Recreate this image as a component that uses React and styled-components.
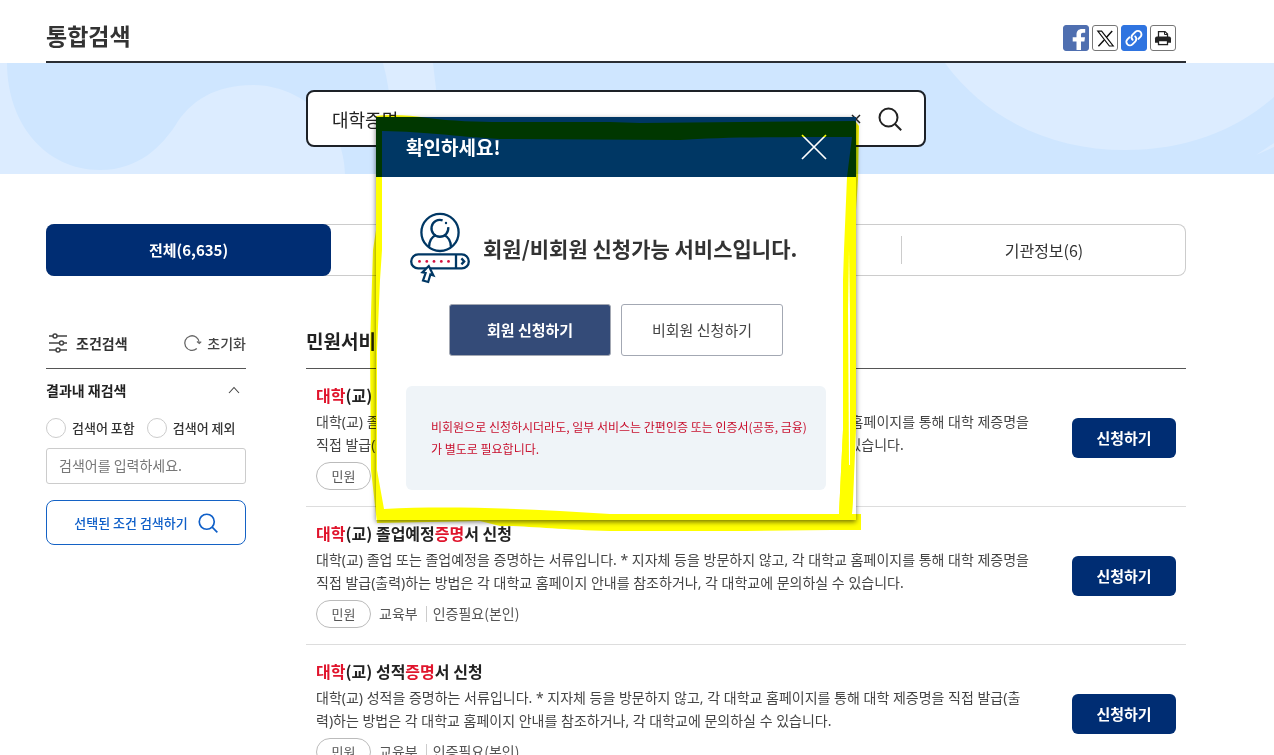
import React, { useState } from 'react'
import styled, { createGlobalStyle, css } from 'styled-components'

const GlobalStyle = createGlobalStyle`
    * {
        box-sizing: border-box;
    }

    body {
        margin: 0;
        background: #fff;
        color: #333;
        font-family: "Noto Sans CJK KR", sans-serif;
        font-size: 14px;
    }

    h1, h2, h3, p, ul {
        margin: 0;
        padding: 0;
    }

    button, input {
        font-family: inherit;
    }

    button {
        padding: 0;
        border: 0;
        background: none;
        color: inherit;
        cursor: pointer;
    }
`

const Page = styled.div`
    position: relative;
    height: 100vh;
    overflow: hidden;
`

const Container = styled.div`
    padding: 0 88px 0 46px;
`

const Header = styled.header`
    display: flex;
    align-items: center;
    justify-content: space-between;
    height: 63px;
    padding: 15px 10px 0 0;
    border-bottom: 2px solid #2b2e34;
`

const PageTitle = styled.h1`
    padding-bottom: 6px;
    font-size: 23px;
    line-height: 32px;
`

const ShareList = styled.div`
    display: flex;
    gap: 3px;
`

const ShareButton = styled.button`
    display: flex;
    width: 26px;
    height: 26px;
    overflow: hidden;
    border: 1px solid ${props => props.$line || props.$bg};
    border-radius: 3px;
    background: ${props => props.$bg};
`

const Banner = styled.section`
    position: relative;
    height: 111px;
    padding-top: 27px;
    background: #cfe6ff;
`

const Waves = styled.svg`
    position: absolute;
    top: 0;
    left: 0;
    width: 100%;
    height: 100%;
`

const SearchForm = styled.form`
    position: relative;
    display: flex;
    align-items: center;
    max-width: 620px;
    height: 57px;
    margin: 0 auto;
    padding: 0 22px 0 24px;
    border: 2px solid #1d2127;
    border-radius: 8px;
    background: #fff;
    color: #222;
`

const SearchInput = styled.input`
    flex: 1;
    min-width: 0;
    padding: 0;
    border: 0;
    outline: 0;
    background: none;
    color: #222;
    font-size: 18px;
`

const IconButton = styled.button`
    display: flex;
    margin-left: ${props => props.$gap || 0}px;
`

const Tabs = styled.nav`
    display: grid;
    grid-template-columns: repeat(4, 1fr);
    height: 52px;
    margin-top: 50px;
    border-radius: 8px;
    box-shadow: inset 0 0 0 1px #ccc;
`

const Tab = styled.button`
    display: flex;
    align-items: center;
    justify-content: center;
    color: #333;
    font-size: 16px;

    span {
        flex: 1;
        line-height: 28px;
    }

    & + & span {
        border-left: 1px solid #ccc;
    }

    ${props => props.$active && css`
        border-radius: 8px;
        background: #002d73;
        color: #fff;
        font-size: 15px;
        font-weight: 700;
    `}
`

const Columns = styled.div`
    display: grid;
    grid-template-columns: 200px 1fr;
    gap: 60px;
    margin-top: 40px;
`

const PanelHead = styled.div`
    display: flex;
    align-items: center;
    height: 53px;
    padding-top: 2px;
    border-bottom: 1px solid #555;
`

const FilterTitle = styled.h2`
    flex: 1;
    margin-left: 8px;
    color: #333;
    font-size: 14px;
`

const ResetButton = styled.button`
    display: flex;
    align-items: center;
    gap: 4px;
    color: #444;
    font-size: 14px;
    font-weight: 500;
`

const FoldButton = styled.button`
    display: flex;
    align-items: center;
    justify-content: space-between;
    width: 100%;
    height: 44px;
    padding: 0 6px 2px 0;
    color: #222;
    font-size: 14px;
    font-weight: 700;
`

const Radios = styled.div`
    display: flex;
    gap: 12px;
    height: 30px;
    align-items: center;
`

const RadioLabel = styled.label`
    display: flex;
    align-items: center;
    gap: 6px;
    color: #333;
    font-size: 13px;
    font-weight: 500;
    line-height: 20px;
`

const Radio = styled.input`
    appearance: none;
    width: 20px;
    height: 20px;
    margin: 0;
    border: 1px solid #ccc;
    border-radius: 50%;
    background: #fff;

    &:checked {
        border: 6px solid #0b5bc4;
    }
`

const WordInput = styled.input`
    display: block;
    width: 100%;
    height: 36px;
    margin-top: 5px;
    padding: 0 12px 2px;
    border: 1px solid #ccc;
    border-radius: 3px;
    font-size: 14px;

    &::placeholder {
        color: #777;
    }
`

const FilterButton = styled.button`
    display: flex;
    align-items: center;
    justify-content: center;
    gap: 10px;
    width: 100%;
    height: 45px;
    margin-top: 16px;
    border: 1px solid #1462c5;
    border-radius: 8px;
    color: #0f5fc8;
    font-size: 13px;
    font-weight: 500;
`

const ResultTitle = styled.h2`
    padding-bottom: 6px;
    color: #222;
    font-size: 19px;
`

const ResultItem = styled.li`
    display: flex;
    align-items: flex-start;
    gap: 20px;
    padding: 14px 10px 16px;
    border-bottom: 1px solid #ddd;
    list-style: none;
`

const ResultBody = styled.div`
    flex: 1;
    min-width: 0;
`

const ResultName = styled.h3`
    color: #222;
    font-size: 16px;
    line-height: 24px;

    em {
        color: #e0142c;
        font-style: normal;
    }
`

const Description = styled.p`
    margin-top: 3px;
    color: #444;
    font-family: "Noto Sans", "Noto Sans CJK KR", sans-serif;
    font-size: 14px;
    line-height: 23px;
    white-space: pre-line;
`

const Meta = styled.div`
    display: flex;
    align-items: center;
    height: 28px;
    margin-top: 6px;
    color: #555;
    font-size: 14px;
    line-height: 14px;

    span {
        padding-bottom: 2px;
    }

    span + span {
        margin-left: 8px;
        padding-left: 6px;
        border-left: 1px solid #ccc;
    }
`

const Badge = styled.strong`
    width: 55px;
    height: 28px;
    margin-right: 8px;
    border: 1px solid #bbb;
    border-radius: 14px;
    font-size: 13px;
    font-weight: 400;
    line-height: 25px;
    text-align: center;
`

const ApplyButton = styled.button`
    width: 104px;
    height: 40px;
    margin-top: 35px;
    padding-bottom: 2px;
    border-radius: 6px;
    background: #002d73;
    color: #fff;
    font-size: 15px;
    font-weight: 700;
`

const ModalLayer = styled.div`
    position: absolute;
    top: 117px;
    right: 88px;
    left: 46px;
    display: flex;
    justify-content: center;
`

const Modal = styled.div`
    width: 480px;
    background: #fff;
    box-shadow: 0 2px 5px rgba(0, 0, 0, 0.55);
`

const ModalHead = styled.div`
    display: flex;
    align-items: center;
    justify-content: space-between;
    height: 60px;
    padding: 0 29px 0 30px;
    background: #003764;
    color: #fff;

    h2 {
        padding-bottom: 2px;
        font-size: 19px;
    }
`

const ModalBody = styled.div`
    padding: 34px 30px 30px;
`

const Notice = styled.div`
    display: flex;
    align-items: center;
    gap: 12px;
    height: 76px;
    padding-left: 3px;

    p {
        padding-bottom: 2px;
        color: #333;
        font-size: 21px;
        font-weight: 700;
    }
`

const ModalButtons = styled.div`
    display: flex;
    justify-content: center;
    gap: 10px;
    margin-top: 17px;
`

const ModalButton = styled.button`
    width: 162px;
    height: 52px;
    padding-bottom: 2px;
    border: 1px solid #a3a8b3;
    border-radius: 3px;
    background: ${props => (props.$primary ? '#344b78' : '#fff')};
    color: ${props => (props.$primary ? '#fff' : '#444')};
    font-size: 15px;
    font-weight: ${props => (props.$primary ? 700 : 400)};
`

const Guide = styled.p`
    padding: 30px 10px 30px 25px;
    margin-top: 30px;
    border-radius: 6px;
    background: #eff4f8;
    color: #c8102e;
    font-size: 12px;
    line-height: 22px;
`

// sits beside the dialog, not in it, so that the ink also tints the page behind
const MarkerLayer = styled(ModalLayer)`
    top: 100px;
    mix-blend-mode: multiply;
    pointer-events: none;
`

const MagnifierIcon = ({ size, width }) => (
    <svg width={size} height={size} viewBox="0 0 24 24" fill="none" stroke="currentColor" strokeWidth={width}>
        <circle cx="10.5" cy="10.5" r="9" />
        <path d="M17 17L23.2 23.2" />
    </svg>
)

const FacebookIcon = () => (
    <svg width="24" height="24" viewBox="0 0 24 24" fill="#fff">
        <path d="M12.5 25V15.5H8.7V11.2H12.5V8.6C12.5 5 14.5 2.9 18 2.9H21.2V6.8H19C17.5 6.8 17 7.5 17 8.8V11.2H21L20.4 15.5H17V25Z" />
    </svg>
)

const XIcon = () => (
    <svg width="24" height="24" viewBox="0 0 24 24" fill="none" stroke="#111">
        <path d="M4.8 5.2H8.6L20.2 20H16.4Z" strokeWidth="1.2" />
        <path d="M19.2 5L13.3 11.6M11.2 13.9L5.4 20.3" strokeWidth="1.5" />
    </svg>
)

const LinkIcon = () => (
    <svg width="24" height="24" viewBox="0 0 24 24" fill="none" stroke="#fff" strokeWidth="1.9" strokeLinecap="round">
        <path d="M10.6 13.8A3.5 3.5 0 0 1 10.4 8.9L13.4 5.9A3.5 3.5 0 0 1 18.4 10.9L16.4 12.9" />
        <path d="M13.2 10.4A3.5 3.5 0 0 1 13.4 15.3L10.4 18.3A3.5 3.5 0 0 1 5.4 13.3L7.4 11.3" />
    </svg>
)

const PrintIcon = () => (
    <svg width="24" height="24" viewBox="0 0 24 24">
        <path d="M7.5 11V5.6H14L16.5 8V11" fill="#fff" stroke="#222" strokeWidth="1.3" />
        <path d="M13.5 5.5V8.5H16.5" fill="none" stroke="#222" />
        <path d="M6 10.6H18Q20 10.6 20 12.5V16.8H4V12.5Q4 10.6 6 10.6Z" fill="#222" />
        <rect x="7.5" y="14.6" width="9" height="4" fill="#fff" stroke="#222" strokeWidth="1.3" />
    </svg>
)

const CrossIcon = ({ size, width }) => (
    <svg width={size} height={size} viewBox={`0 0 ${size} ${size}`} stroke="currentColor" strokeWidth={width}>
        <path d={`M1 1L${size - 1} ${size - 1}M${size - 1} 1L1 ${size - 1}`} />
    </svg>
)

const SlidersIcon = () => (
    <svg width="22" height="22" viewBox="0 0 22 22" fill="#fff" stroke="#444" strokeWidth="1.5">
        <path d="M3 4H21M3 11H21M3 18H21" />
        <circle cx="9" cy="4" r="2" />
        <circle cx="15.5" cy="11" r="2" />
        <circle cx="12" cy="18" r="2" />
    </svg>
)

const ResetIcon = () => (
    <svg width="20" height="18" viewBox="0 0 20 18" fill="none" stroke="#666" strokeWidth="1.3">
        <path d="M13.8 14.6A7.3 7.3 0 1 1 16.3 8.8" />
        <path d="M14 7.6L16.3 9.4L18.2 7.6" />
    </svg>
)

const ChevronIcon = () => (
    <svg width="12" height="8" viewBox="0 0 12 8" fill="none" stroke="#444" strokeWidth="1.1">
        <path d="M1 7L6 1.5L11 7" />
    </svg>
)

const MemberIcon = () => (
    <svg width="62" height="74" viewBox="0 0 62 74" fill="none" stroke="#003764" strokeWidth="2.3">
        <circle cx="31" cy="20.4" r="18.6" />
        <path d="M33.6 8.4A8.4 8.4 0 1 0 39.2 15.2" />
        <path d="M20 35.4C20 28 23.5 24.6 27 23M42 35.4C42 28 38.5 24.6 35 23" />
        <circle cx="37" cy="11" r="1.2" fill="#003764" stroke="none" />
        <rect x="2.2" y="42.4" width="57.6" height="14" rx="7" />
        <path d="M47 42.6V56.6M52.4 46.4L55.2 49.4L52.4 52.4" />
        <g fill="#d5113f" stroke="none">
            <circle cx="10.5" cy="49.4" r="1.4" />
            <circle cx="17.8" cy="49.4" r="1.4" />
            <circle cx="25" cy="49.4" r="1.4" />
            <circle cx="32.3" cy="49.4" r="1.4" />
            <circle cx="39.5" cy="49.4" r="1.4" />
        </g>
        <path d="M19.8 54L13.4 60.4L16.6 61L14 68.6L19.2 70L21.4 62.4L24.4 63.4Z" fill="#fff" strokeWidth="2.2" />
    </svg>
)

const HighlighterMark = () => (
    <MarkerLayer>
        <svg width="510" height="440" viewBox="361 100 510 440" fill="#ff0" aria-hidden="true">
            <path
                fillRule="evenodd"
                d="M376 116C390 114 410 115 428 118C450 121 480 122 500 122L610 122L640 123L855 121L859 126L858 180L856 210V430L853 500L852 514H861V530H832L745 531H610C560 530 530 526 500 526L480 521L377 523L371 470L370 345L373 250L376 230ZM382 131C430 132 450 136 500 139L680 140C720 137 790 137 852 137L847 177L844 250L843 280V430L839 514H610L560 511C500 508 440 506 384 509L377 470L377 350L380 280L382 250Z"
            />
            <path d="M839 514L843 430H855L852 514Z" />
            <path d="M849 250L850 310V465H849L848 310Z" fill="#fff" />
        </svg>
    </MarkerLayer>
)

const results = [
    {
        name: ' 졸업',
        description: '대학(교) 졸업 또는 졸업예정을 증명하는 서류입니다. * 지자체 등을 방문하지 않고, 각 대학교 홈페이지를 통해 대학 제증명을\n직접 발급(출력)하는 방법은 각 대학교 홈페이지 안내를 참조하거나, 각 대학교에 문의하실 수 있습니다.',
    },
    {
        name: ' 졸업예정',
        description: '대학(교) 졸업 또는 졸업예정을 증명하는 서류입니다. * 지자체 등을 방문하지 않고, 각 대학교 홈페이지를 통해 대학 제증명을\n직접 발급(출력)하는 방법은 각 대학교 홈페이지 안내를 참조하거나, 각 대학교에 문의하실 수 있습니다.',
    },
    {
        name: ' 성적',
        description: '대학(교) 성적을 증명하는 서류입니다. * 지자체 등을 방문하지 않고, 각 대학교 홈페이지를 통해 대학 제증명을 직접 발급(출\n력)하는 방법은 각 대학교 홈페이지 안내를 참조하거나, 각 대학교에 문의하실 수 있습니다.',
    },
]

const tabs = ['전체(6,635)', '', '', '기관정보(6)']

const Filter = () => (
    <aside>
        <PanelHead>
            <SlidersIcon />
            <FilterTitle>조건검색</FilterTitle>
            <ResetButton type="button">
                <ResetIcon />
                초기화
            </ResetButton>
        </PanelHead>
        <FoldButton type="button">
            결과내 재검색
            <ChevronIcon />
        </FoldButton>
        <Radios>
            <RadioLabel>
                <Radio type="radio" name="range" />
                검색어 포함
            </RadioLabel>
            <RadioLabel>
                <Radio type="radio" name="range" />
                검색어 제외
            </RadioLabel>
        </Radios>
        <WordInput type="text" aria-label="검색어" placeholder="검색어를 입력하세요." />
        <FilterButton type="button">
            선택된 조건 검색하기
            <MagnifierIcon size={20} width={2} />
        </FilterButton>
    </aside>
)

const Results = () => (
    <main>
        <PanelHead>
            <ResultTitle>민원서비스</ResultTitle>
        </PanelHead>
        <ul>
            {results.map(item => (
                <ResultItem key={item.name}>
                    <ResultBody>
                        <ResultName>
                            <em>대학</em>(교){item.name}<em>증명</em>서 신청
                        </ResultName>
                        <Description>{item.description}</Description>
                        <Meta>
                            <Badge>민원</Badge>
                            <span>교육부</span>
                            <span>인증필요(본인)</span>
                        </Meta>
                    </ResultBody>
                    <ApplyButton type="button">신청하기</ApplyButton>
                </ResultItem>
            ))}
        </ul>
    </main>
)

const MemberModal = ({ onClose }) => (
    <ModalLayer>
        <Modal role="dialog" aria-labelledby="modal-title">
            <ModalHead>
                <h2 id="modal-title">확인하세요!</h2>
                <IconButton type="button" aria-label="닫기" onClick={onClose}>
                    <CrossIcon size={26} width={1.7} />
                </IconButton>
            </ModalHead>
            <ModalBody>
                <Notice>
                    <MemberIcon />
                    <p>회원/비회원 신청가능 서비스입니다.</p>
                </Notice>
                <ModalButtons>
                    <ModalButton type="button" $primary>회원 신청하기</ModalButton>
                    <ModalButton type="button">비회원 신청하기</ModalButton>
                </ModalButtons>
                <Guide>
                    비회원으로 신청하시더라도, 일부 서비스는 간편인증 또는 인증서(공동, 금융)
                    <br />
                    가 별도로 필요합니다.
                </Guide>
            </ModalBody>
        </Modal>
    </ModalLayer>
)

const App = () => {
    const [keyword, setKeyword] = useState('대학증명')
    const [open, setOpen] = useState(true)

    return (
        <Page>
            <GlobalStyle />
            <Container>
                <Header>
                    <PageTitle>통합검색</PageTitle>
                    <ShareList>
                        <ShareButton type="button" aria-label="페이스북" $bg="#4f6fb0"><FacebookIcon /></ShareButton>
                        <ShareButton type="button" aria-label="X" $bg="#fff" $line="#777"><XIcon /></ShareButton>
                        <ShareButton type="button" aria-label="링크 복사" $bg="#2f74e0"><LinkIcon /></ShareButton>
                        <ShareButton type="button" aria-label="인쇄" $bg="#fff" $line="#777"><PrintIcon /></ShareButton>
                    </ShareList>
                </Header>
            </Container>
            <Banner>
                <Waves viewBox="0 0 1274 111" preserveAspectRatio="none" fill="#dcecff" aria-hidden="true">
                    <path d="M0 0H7C7 60 45 107 100 107C140 107 162 82 175 63C190 38 215 22 253 22C300 22 345 60 345 111H0Z" />
                    <path d="M383 0H433L440 60H392Q390 25 383 0Z" />
                    <path d="M945 0C985 55 1050 87 1125 87C1185 87 1235 68 1274 34V0Z" />
                    <path d="M1256 92L1274 80V84Z" />
                </Waves>
                <Container>
                    <SearchForm onSubmit={e => e.preventDefault()}>
                        <SearchInput
                            aria-label="통합검색"
                            value={keyword}
                            onChange={e => setKeyword(e.target.value)}
                        />
                        <IconButton type="button" aria-label="지우기" onClick={() => setKeyword('')}>
                            <CrossIcon size={10} width={1.5} />
                        </IconButton>
                        <IconButton type="submit" aria-label="검색" $gap={17}>
                            <MagnifierIcon size={24} width={2} />
                        </IconButton>
                    </SearchForm>
                </Container>
            </Banner>
            <Container>
                <Tabs>
                    {tabs.map((label, i) => (
                        <Tab key={i} type="button" $active={i === 0}>
                            <span>{label || '\u00a0'}</span>
                        </Tab>
                    ))}
                </Tabs>
                <Columns>
                    <Filter />
                    <Results />
                </Columns>
            </Container>
            {open && <MemberModal onClose={() => setOpen(false)} />}
            {open && <HighlighterMark />}
        </Page>
    )
}

export default App
